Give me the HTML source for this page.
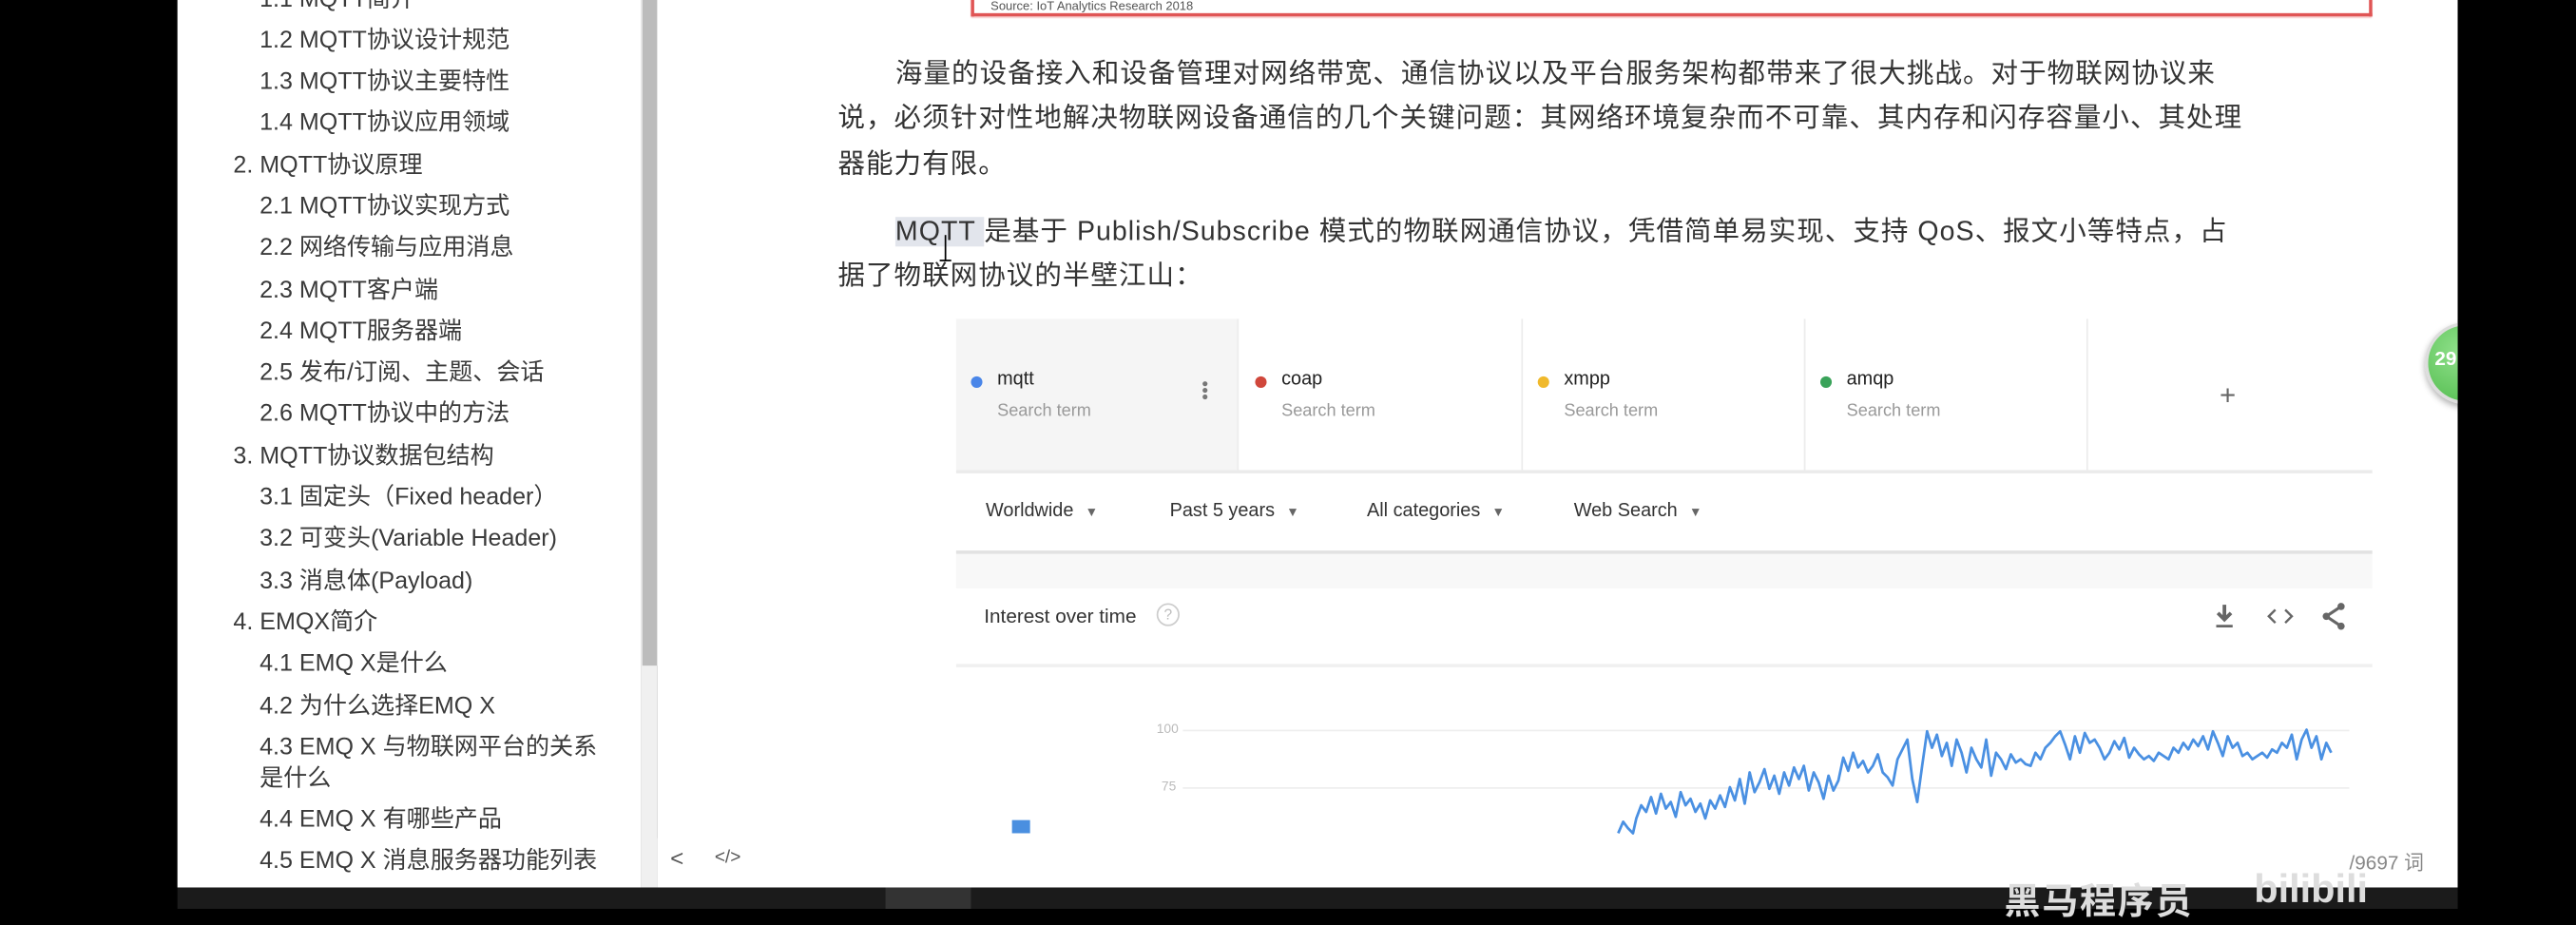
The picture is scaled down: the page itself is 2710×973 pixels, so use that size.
<!DOCTYPE html>
<html><head><meta charset="utf-8"><style>
html,body{margin:0;padding:0;background:#000;overflow:hidden;}
#w{position:absolute;left:0;top:0;width:1568px;height:553px;transform:scale(1.72832,1.72875);transform-origin:0 0;font-family:"Liberation Sans","Noto Sans CJK SC",sans-serif;}
.a{position:absolute;white-space:nowrap;}
.side{position:absolute;left:108px;top:0;width:282px;height:540px;background:#fff;}
.si{position:absolute;font-size:14.5px;color:#3a3a3a;line-height:18px;white-space:nowrap;}
.c{position:absolute;left:400px;top:0;width:1096px;height:540px;background:#fff;}
.p{position:absolute;font-size:16.5px;letter-spacing:0.6px;color:#333;line-height:18px;white-space:nowrap;}
.t{font-size:11.5px;color:#222;}
.st{font-size:10.5px;color:#999;}
.dot{position:absolute;width:7px;height:7px;border-radius:50%;}
.f{position:absolute;font-size:11.5px;color:#333;white-space:nowrap;}
.f span{font-size:8px;color:#666;margin-left:7px;}
</style></head><body><div id="w">
<div class="side">
<div class="si" style="left:50px;top:-9px">1.1 MQTT简介</div>
<div class="si" style="left:50px;top:16px">1.2 MQTT协议设计规范</div>
<div class="si" style="left:50px;top:41px">1.3 MQTT协议主要特性</div>
<div class="si" style="left:50px;top:66px">1.4 MQTT协议应用领域</div>
<div class="si" style="left:34px;top:92px">2. MQTT协议原理</div>
<div class="si" style="left:50px;top:117px">2.1 MQTT协议实现方式</div>
<div class="si" style="left:50px;top:142px">2.2 网络传输与应用消息</div>
<div class="si" style="left:50px;top:168px">2.3 MQTT客户端</div>
<div class="si" style="left:50px;top:193px">2.4 MQTT服务器端</div>
<div class="si" style="left:50px;top:218px">2.5 发布/订阅、主题、会话</div>
<div class="si" style="left:50px;top:243px">2.6 MQTT协议中的方法</div>
<div class="si" style="left:34px;top:269px">3. MQTT协议数据包结构</div>
<div class="si" style="left:50px;top:294px">3.1 固定头（Fixed header）</div>
<div class="si" style="left:50px;top:319px">3.2 可变头(Variable Header)</div>
<div class="si" style="left:50px;top:345px">3.3 消息体(Payload)</div>
<div class="si" style="left:34px;top:370px">4. EMQX简介</div>
<div class="si" style="left:50px;top:395px">4.1 EMQ X是什么</div>
<div class="si" style="left:50px;top:421px">4.2 为什么选择EMQ X</div>
<div class="si" style="left:50px;top:446px">4.3 EMQ X 与物联网平台的关系</div>
<div class="si" style="left:50px;top:465px">是什么</div>
<div class="si" style="left:50px;top:490px">4.4 EMQ X 有哪些产品</div>
<div class="si" style="left:50px;top:515px">4.5 EMQ X 消息服务器功能列表</div>
</div>
<div style="position:absolute;left:390px;top:0;width:10px;height:540px;background:#f0f0f0"></div>
<div style="position:absolute;left:391px;top:0;width:9px;height:405px;background:#bcbcbc"></div>
<div class="c">
<div style="position:absolute;left:191px;top:-4px;width:849px;height:12px;border:2px solid #e05555;border-top:none;box-shadow:0 1px 1px #f3b0b0"></div>
<div class="a" style="left:203px;top:-1px;font-size:7.5px;color:#555">Source: IoT Analytics Research 2018</div>
<div class="p" style="left:145px;top:36px">海量的设备接入和设备管理对网络带宽、通信协议以及平台服务架构都带来了很大挑战。对于物联网协议来</div>
<div class="p" style="left:110px;top:63px">说，必须针对性地解决物联网设备通信的几个关键问题：其网络环境复杂而不可靠、其内存和闪存容量小、其处理</div>
<div class="p" style="left:110px;top:91px">器能力有限。</div>
<div class="p" style="left:145px;top:132px"><span style="background:#e2e5ec">MQTT </span>是基于 Publish/Subscribe 模式的物联网通信协议，凭借简单易实现、支持 QoS、报文小等特点，占</div>
<div class="p" style="left:110px;top:159px">据了物联网协议的半壁江山：</div>
<div style="position:absolute;left:175px;top:143px;width:1px;height:16px;background:#000"></div>
<div style="position:absolute;left:172px;top:158px;width:7px;height:1px;background:#000"></div>
<div style="position:absolute;left:182px;top:194px;width:171px;height:92px;background:#f5f5f5"></div>
<div style="position:absolute;left:353px;top:194px;width:1px;height:92px;background:#ececec"></div>
<div style="position:absolute;left:526px;top:194px;width:1px;height:92px;background:#ececec"></div>
<div style="position:absolute;left:698px;top:194px;width:1px;height:92px;background:#ececec"></div>
<div style="position:absolute;left:870px;top:194px;width:1px;height:92px;background:#ececec"></div>
<div style="position:absolute;left:182px;top:286px;width:862px;height:2px;background:#ebebeb"></div>
<div class="dot" style="left:191px;top:229px;background:#4a86e8"></div>
<div class="a t" style="left:207px;top:225px">mqtt</div><div class="a st" style="left:207px;top:244px">Search term</div>
<div class="a" style="left:332px;top:232px;width:3px;height:3px;border-radius:50%;background:#777;box-shadow:0 4px 0 #777,0 8px 0 #777"></div>
<div class="dot" style="left:364px;top:229px;background:#d0473b"></div>
<div class="a t" style="left:380px;top:225px">coap</div><div class="a st" style="left:380px;top:244px">Search term</div>
<div class="dot" style="left:536px;top:229px;background:#f0b92c"></div>
<div class="a t" style="left:552px;top:225px">xmpp</div><div class="a st" style="left:552px;top:244px">Search term</div>
<div class="dot" style="left:708px;top:229px;background:#3aa35a"></div>
<div class="a t" style="left:724px;top:225px">amqp</div><div class="a st" style="left:724px;top:244px">Search term</div>
<div class="a" style="left:951px;top:231px;font-size:17px;color:#666">+</div>
<div class="f" style="left:200px;top:305px">Worldwide<span>▼</span></div>
<div class="f" style="left:312px;top:305px">Past 5 years<span>▼</span></div>
<div class="f" style="left:432px;top:305px">All categories<span>▼</span></div>
<div class="f" style="left:558px;top:305px">Web Search<span>▼</span></div>
<div style="position:absolute;left:182px;top:335px;width:862px;height:23px;background:#f8f8f8;border-top:2px solid #e2e2e2;box-sizing:border-box"></div>
<div class="a" style="left:199px;top:368px;font-size:12px;color:#333">Interest over time</div>
<div class="a" style="left:304px;top:367px;width:12px;height:12px;border:1px solid #ccc;border-radius:50%;font-size:9px;color:#bbb;text-align:center;line-height:12px">?</div>
<svg class="a" style="left:945px;top:366px" width="100" height="18" viewBox="0 0 100 18">
<path d="M9 2v8M5 7l4 4 4-4" stroke="#666" stroke-width="2.2" fill="none"/><path d="M4 15h10" stroke="#666" stroke-width="1.6"/>
<path d="M40 5l-4 4 4 4M46 5l4 4-4 4" stroke="#666" stroke-width="1.4" fill="none"/>
<path d="M80 3l-9 6 9 6" stroke="#666" stroke-width="1.8" fill="none"/><circle cx="80" cy="3" r="2.2" fill="#666"/><circle cx="71" cy="9" r="2.2" fill="#666"/><circle cx="80" cy="15" r="2.2" fill="#666"/>
</svg>
<div style="position:absolute;left:182px;top:404px;width:862px;height:2px;background:#f0f0f0"></div>
<div class="a" style="left:304px;top:439px;font-size:8px;color:#bbb">100</div>
<div class="a" style="left:307px;top:474px;font-size:8px;color:#bbb">75</div>
<div style="position:absolute;left:320px;top:444px;width:710px;height:1px;background:#eee"></div>
<div style="position:absolute;left:320px;top:479px;width:710px;height:1px;background:#eee"></div>
<div style="position:absolute;left:216px;top:499px;width:11px;height:8px;background:#4a8fe0"></div>
<div style="position:absolute;left:0;top:510px;width:1096px;height:30px;background:#fff"></div>
<div class="a" style="left:8px;top:514px;font-size:14px;color:#555">&lt;</div>
<div class="a" style="left:35px;top:516px;font-size:11px;color:#555">&lt;/&gt;</div>
<div class="a" style="left:1030px;top:516px;font-size:12px;color:#888">/9697 词</div>
</div>
<svg style="position:absolute;left:0;top:0" width="1568" height="553">
<polyline fill="none" stroke="#4a90e2" stroke-width="1.6" stroke-linejoin="round" points="985,507 988,500 991,504 994,507 996,498 999,490 1002,494 1005,485 1008,495 1011,483 1014,492 1017,488 1020,497 1023,482 1026,490 1029,486 1032,494 1035,489 1038,498 1041,487 1044,492 1047,484 1050,491 1053,479 1056,487 1059,474 1062,489 1065,470 1068,482 1071,476 1074,468 1077,480 1080,472 1083,483 1086,470 1089,478 1092,467 1095,474 1098,466 1101,481 1104,470 1107,476 1110,486 1113,472 1116,481 1119,475 1122,461 1125,469 1128,458 1131,467 1134,463 1137,470 1140,466 1143,459 1146,470 1149,473 1152,478 1155,462 1158,456 1161,450 1164,474 1167,488 1170,466 1173,445 1176,455 1179,447 1182,460 1185,452 1188,466 1191,450 1194,458 1197,470 1200,455 1203,462 1206,467 1209,450 1212,472 1215,458 1218,462 1221,468 1224,459 1227,464 1230,462 1233,465 1236,466 1239,458 1242,462 1245,455 1248,452 1251,448 1254,445 1257,453 1260,462 1263,448 1266,458 1269,446 1272,452 1275,450 1278,455 1281,462 1284,458 1287,451 1290,456 1293,449 1296,461 1299,455 1302,459 1305,462 1308,460 1311,463 1314,458 1317,460 1320,462 1323,455 1326,458 1329,452 1332,456 1335,450 1338,454 1341,448 1344,456 1347,445 1350,452 1353,460 1356,448 1359,455 1362,452 1365,460 1368,458 1371,462 1374,460 1377,458 1380,461 1383,456 1386,458 1389,452 1392,455 1395,447 1398,462 1401,450 1404,444 1407,455 1410,448 1413,462 1416,452 1419,458"/>
</svg>
<div style="position:absolute;left:1476px;top:196px;width:46px;height:46px;border-radius:50%;background:radial-gradient(circle at 40% 35%,#8fe08a,#4cb848);border:2px solid #ddd;box-shadow:0 2px 4px rgba(0,0,0,.3)"></div>
<div class="a" style="left:1482px;top:211px;font-size:12px;color:#fff;font-weight:bold">29</div>
<div style="position:absolute;left:1496px;top:0;width:72px;height:553px;background:#000"></div>
<div style="position:absolute;left:108px;top:540px;width:1388px;height:13px;background:#1b1b1b"></div>
<div style="position:absolute;left:539px;top:540px;width:52px;height:13px;background:#333"></div>
<div class="a" style="left:1220px;top:531px;font-size:22px;color:#ddd;font-weight:bold;letter-spacing:1px">黑马程序员</div>
<div class="a" style="left:1372px;top:528px;font-size:24px;color:#ddd;font-weight:bold">bilibili</div>
</div></body></html>
